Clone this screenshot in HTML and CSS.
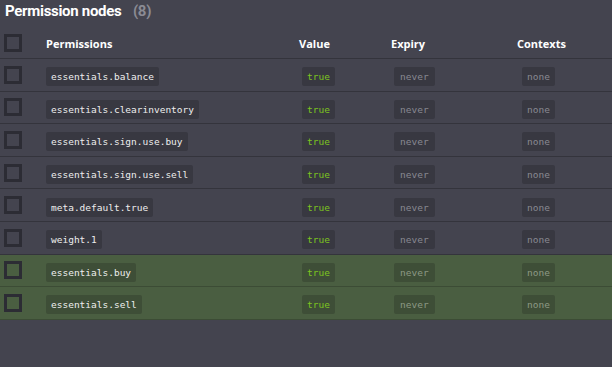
FILE: index.html
```html
<!DOCTYPE html>
<html lang="en">
<head>
    <meta charset="UTF-8">
    <meta name="viewport" content="width=device-width, initial-scale=1.0">
    <title>Permission nodes</title>
    <link rel="stylesheet" href="styles.css">
</head>
<body>
    <div class="nodes">
        <h2 class="title">Permission nodes <span class="count">(8)</span></h2>
        <div class="table">
            <div class="row head">
                <span class="box"></span>
                <span>Permissions</span>
                <span>Value</span>
                <span>Expiry</span>
                <span>Contexts</span>
            </div>
            <div class="row">
                <span class="box"></span>
                <span><code class="chip perm">essentials.balance</code></span>
                <span><code class="chip val">true</code></span>
                <span><code class="chip exp">never</code></span>
                <span><code class="chip ctx">none</code></span>
            </div>
            <div class="row">
                <span class="box"></span>
                <span><code class="chip perm">essentials.clearinventory</code></span>
                <span><code class="chip val">true</code></span>
                <span><code class="chip exp">never</code></span>
                <span><code class="chip ctx">none</code></span>
            </div>
            <div class="row">
                <span class="box"></span>
                <span><code class="chip perm">essentials.sign.use.buy</code></span>
                <span><code class="chip val">true</code></span>
                <span><code class="chip exp">never</code></span>
                <span><code class="chip ctx">none</code></span>
            </div>
            <div class="row">
                <span class="box"></span>
                <span><code class="chip perm">essentials.sign.use.sell</code></span>
                <span><code class="chip val">true</code></span>
                <span><code class="chip exp">never</code></span>
                <span><code class="chip ctx">none</code></span>
            </div>
            <div class="row">
                <span class="box"></span>
                <span><code class="chip perm">meta.default.true</code></span>
                <span><code class="chip val">true</code></span>
                <span><code class="chip exp">never</code></span>
                <span><code class="chip ctx">none</code></span>
            </div>
            <div class="row">
                <span class="box"></span>
                <span><code class="chip perm">weight.1</code></span>
                <span><code class="chip val">true</code></span>
                <span><code class="chip exp">never</code></span>
                <span><code class="chip ctx">none</code></span>
            </div>
            <div class="row new">
                <span class="box"></span>
                <span><code class="chip perm">essentials.buy</code></span>
                <span><code class="chip val">true</code></span>
                <span><code class="chip exp">never</code></span>
                <span><code class="chip ctx">none</code></span>
            </div>
            <div class="row new">
                <span class="box"></span>
                <span><code class="chip perm">essentials.sell</code></span>
                <span><code class="chip val">true</code></span>
                <span><code class="chip exp">never</code></span>
                <span><code class="chip ctx">none</code></span>
            </div>
        </div>
    </div>
</body>
</html>
```

FILE: styles.css
```css
body { margin: 0; background: #44444f; color: #fff; font-family: "Open Sans", "Noto Sans", sans-serif; height: 367px; overflow: hidden; }
.title { margin: 0; padding: 1px 5px 0; font-family: Roboto, "Open Sans", sans-serif; font-size: 15px; font-weight: 700; line-height: 21px; letter-spacing: -0.3px; }
.title .count { margin-left: 8px; color: #8b8b94; }
.row { display: grid; grid-template-columns: 42px 253px 92px 126px 1fr; align-items: center; padding-left: 4px; height: 31.6px; border-bottom: 1px solid #34343c; }
.row.head { height: 30px; padding-top: 6px; font-size: 11px; font-weight: 700; }
.row.new { background: #4a5e41; border-bottom-color: #3c4c35; }
.box { width: 12px; height: 12px; border: 3px solid #2c2c34; }
.chip { display: inline-block; font-family: "DejaVu Sans Mono", monospace; font-size: 9.5px; line-height: 19px; padding: 0 5px; border-radius: 2px; background: #383841; }
.row.new .chip { background: #3e4e37; }
.perm { color: #eeeeee; }
.val { color: #7dc51f; margin-left: 3px; }
.exp { color: #898992; margin-left: 3px; padding: 0 6px; }
.ctx { color: #898992; margin-left: 5px; }
.row.new .exp, .row.new .ctx { color: #8d9985; }
```
